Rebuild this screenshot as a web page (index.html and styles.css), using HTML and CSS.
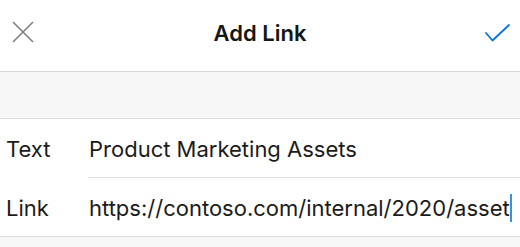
FILE: index.html
```html
<!DOCTYPE html>
<html>
<head>
<meta charset="utf-8">
<link rel="stylesheet" href="styles.css">
</head>
<body>
<header class="nav">
  <svg class="nav-icon" width="46" height="71" viewBox="0 0 46 71">
    <path d="M13 22 L33 42 M33 22 L13 42" stroke="#7f7f7f" stroke-width="1.6" fill="none"/>
  </svg>
  <h1 class="nav-title">Add Link</h1>
  <svg class="nav-icon" width="46" height="71" viewBox="474 0 46 71">
    <path d="M486 33 L492.5 40.5 L509 25" stroke="#0a73d9" stroke-width="1.8" fill="none" stroke-linecap="round" stroke-linejoin="round"/>
  </svg>
</header>
<div class="spacer"></div>
<section class="form">
  <div class="row">
    <span class="label">Text</span>
    <span class="value">Product Marketing Assets</span>
  </div>
  <div class="row">
    <span class="label">Link</span>
    <span class="value">https://contoso.com/internal/2020/asset<span class="caret"></span></span>
  </div>
</section>
</body>
</html>
```
FILE: styles.css
```css
html, body {
  margin: 0;
  padding: 0;
}
body {
  background: #f7f7f7;
  font-family: "Inter", "Noto Sans", "Liberation Sans", sans-serif;
  color: #1b1b1b;
  width: 520px;
  height: 247px;
  overflow: hidden;
}
.nav {
  height: 71px;
  background: #ffffff;
  border-bottom: 1px solid #d6d6d6;
  display: flex;
  align-items: center;
}
.nav-icon {
  display: block;
  flex: none;
}
.nav-title {
  flex: 1;
  margin: 0;
  text-align: center;
  font-size: 22px;
  font-weight: 600;
  color: #161616;
  letter-spacing: 0;
  padding-bottom: 5px;
}
.spacer {
  height: 46px;
}
.form {
  background: #ffffff;
  border-top: 1px solid #dedede;
  border-bottom: 1px solid #dedede;
}
.row {
  display: flex;
  align-items: center;
  height: 58px;
  padding-left: 6px;
  font-size: 22px;
  font-weight: 400;
  padding-top: 1px;
  box-sizing: border-box;
}
.row + .row {
  border-top: 1px solid #dedede;
  margin-left: 88px;
  padding-left: 0;
  height: 59px;
}
.row + .row .label {
  margin-left: -82px;
}
.label {
  width: 83px;
  flex: none;
  color: #1b1b1b;
}
.value {
  color: #1b1b1b;
  white-space: nowrap;
  display: flex;
  align-items: center;
}
.caret {
  display: inline-block;
  width: 2px;
  height: 28px;
  background: #3b8fe0;
  margin-left: 0;
}
```
